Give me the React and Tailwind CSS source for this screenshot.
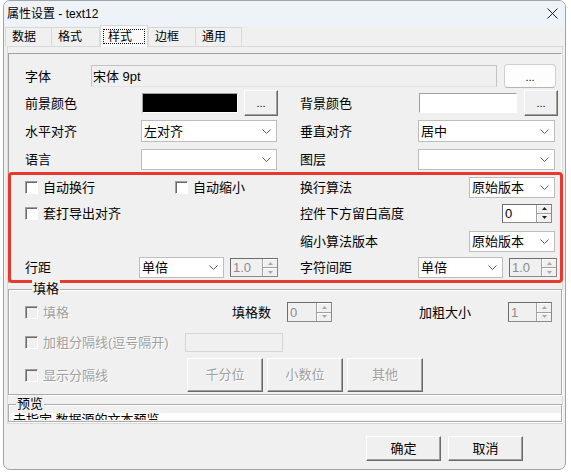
import React from "react";

const FONT = "font-['Liberation_Sans','Noto_Sans_CJK_SC',sans-serif]";
const DIS = "text-[#a0a0a0] [text-shadow:1px_1px_0_#ffffff]";

function Chevron() {
  return (
    <svg width="9" height="5" viewBox="0 0 9 5" className="shrink-0">
      <path d="M0.5 0.5 L4.5 4.5 L8.5 0.5" fill="none" stroke="#5f5f5f" strokeWidth="1" />
    </svg>
  );
}

function Combo({ value, className }) {
  return (
    <div className={`h-[21px] shrink-0 bg-white border border-[#bdbdbd] flex items-center justify-between pl-[2px] pr-[5px] ${className}`}>
      <span className="leading-none">{value}</span>
      <Chevron />
    </div>
  );
}

function Arrow({ up, color }) {
  return (
    <svg width="5" height="3" viewBox="0 0 5 3">
      <path d={up ? "M0 3 L2.5 0 L5 3 Z" : "M0 0 L2.5 3 L5 0 Z"} fill={color} />
    </svg>
  );
}

function Spin({ value, className, disabled }) {
  const arrow = disabled ? "#a8a8a8" : "#202020";
  return (
    <div
      className={`shrink-0 flex border-t border-l border-t-[#6d6d6d] border-l-[#6d6d6d] border-r border-b border-r-[#8a8a8a] border-b-[#8a8a8a] ${
        disabled ? "bg-[#f0f0f0]" : "bg-white"
      } ${className}`}
    >
      <div className={`flex-1 flex items-center pl-[2px] leading-none ${disabled ? "text-[#8c8c8c]" : ""}`}>{value}</div>
      <div className="w-[15px] flex flex-col border-l border-[#a0a0a0]">
        <div className="flex-1 flex items-center justify-center bg-[#f0f0f0] border-b border-[#a0a0a0] shadow-[inset_1px_1px_0_#ffffff]">
          <Arrow up color={arrow} />
        </div>
        <div className="flex-1 flex items-center justify-center bg-[#f0f0f0] shadow-[inset_1px_1px_0_#ffffff]">
          <Arrow color={arrow} />
        </div>
      </div>
    </div>
  );
}

function Btn({ children, className, disabled }) {
  return (
    <div
      className={`shrink-0 flex items-center justify-center bg-[#f0f0f0] border-t border-l border-t-white border-l-white border-r border-b border-r-[#696969] border-b-[#696969] shadow-[inset_-1px_-1px_0_#a0a0a0] ${
        disabled ? DIS : ""
      } ${className}`}
    >
      {children}
    </div>
  );
}

function Check({ label, disabled, className }) {
  return (
    <div className={`shrink-0 flex items-center ${className}`}>
      <span
        className={`w-[13px] h-[13px] shrink-0 border-t border-l border-t-[#a0a0a0] border-l-[#a0a0a0] border-r border-b border-r-white border-b-white shadow-[inset_1px_1px_0_#6a6a6a] ${
          disabled ? "bg-[#f0f0f0]" : "bg-white"
        }`}
      />
      <span className={`ml-[5px] leading-none ${disabled ? DIS : ""}`}>{label}</span>
    </div>
  );
}

function Label({ children, className }) {
  return <span className={`shrink-0 leading-none ${className}`}>{children}</span>;
}

function Swatch({ className }) {
  return (
    <div
      className={`shrink-0 h-[20px] border-t border-l border-t-[#a0a0a0] border-l-[#a0a0a0] border-r border-b border-r-white border-b-white ${className}`}
    />
  );
}

function Tab({ children, active, className }) {
  if (active) {
    return (
      <div className="relative z-10 -mb-[1px] h-[22px] w-[48px] shrink-0 bg-[#f9f9f9] border-t border-l border-r border-[#d9d9d9] flex p-[2px] pt-[3px] pb-[3px]">
        <span className="flex-1 border border-dotted border-[#111111] flex items-center pl-[4px] text-[12px] leading-none">
          {children}
        </span>
      </div>
    );
  }
  return (
    <div
      className={`h-[19px] shrink-0 bg-[#f0f0f0] border-t border-r border-[#d9d9d9] flex items-center pl-[6px] text-[12px] leading-none ${className}`}
    >
      {children}
    </div>
  );
}

function Group({ title, children, className }) {
  return (
    <div
      className={`flex flex-col border border-[#acacac] shadow-[inset_1px_1px_0_#ffffff,1px_1px_0_#ffffff] ${className}`}
    >
      <span className="-mt-[10px] h-[18px] leading-[18px] ml-[7px] px-[1px] w-fit bg-[#f0f0f0]">{title}</span>
      {children}
    </div>
  );
}

export default function App() {
  return (
    <div className={`${FONT} w-[571px] h-[472px] bg-white overflow-hidden text-[13px] text-black`}>
      <div className="ml-[3px] w-[563px] h-[470px] flex flex-col border border-[#a3a3a3] rounded-[7px] bg-[#f0f0f0] overflow-hidden">
        {/* title bar */}
        <div className="h-[25px] shrink-0 flex items-center justify-between bg-[#eef3f9] pl-[3px] pr-[7px]">
          <span className="text-[12px] leading-none">属性设置 - text12</span>
          <svg width="11" height="11" viewBox="0 0 11 11">
            <path d="M0.5 0.5 L10.5 10.5 M10.5 0.5 L0.5 10.5" stroke="#1c1c1c" strokeWidth="1" />
          </svg>
        </div>

        {/* tabs */}
        <div className="h-[20px] shrink-0 flex items-end pl-[1px]">
          <Tab className="w-[47px] border-l">数据</Tab>
          <Tab className="w-[48px]">格式</Tab>
          <Tab active>样式</Tab>
          <Tab className="w-[48px] border-l">边框</Tab>
          <Tab className="w-[46px]">通用</Tab>
        </div>

        {/* tab page */}
        <div className="ml-[3px] w-[556px] shrink-0 border border-[#d9d9d9] flex flex-col pb-[1px]">
          <div className="mt-[6px] border-t border-l border-r border-t-[#a0a0a0] border-l-[#a0a0a0] border-r-white pt-[10px] flex flex-col">
            {/* font */}
            <div className="h-[24px] pl-[16px] flex items-center">
              <Label className="w-[66px]">字体</Label>
              <div className="h-[22px] w-[406px] shrink-0 bg-[#f0f0f0] border border-[#c3c3c3] border-b-[#e4e4e4] flex items-center pl-[1px] leading-none">
                宋体 9pt
              </div>
              <div className="ml-[7px] h-[24px] w-[52px] shrink-0 bg-[#fdfdfd] border border-[#d0d0d0] border-b-[#b5b5b5] rounded-[4px] flex items-end justify-center pb-[4px] text-[11px] leading-none">
                ...
              </div>
            </div>

            {/* colours */}
            <div className="mt-[2px] h-[26px] pl-[16px] flex items-center">
              <Label className="w-[117px]">前景颜色</Label>
              <Swatch className="w-[96px] bg-black" />
              <Btn className="ml-[6px] w-[34px] h-[26px] text-[11px]">...</Btn>
              <Label className="ml-[22px] w-[119px]">背景颜色</Label>
              <Swatch className="w-[98px] bg-white" />
              <Btn className="ml-[7px] w-[34px] h-[26px] text-[11px]">...</Btn>
            </div>

            {/* alignment */}
            <div className="mt-[4px] h-[22px] pl-[16px] flex items-center">
              <Label className="w-[116px]">水平对齐</Label>
              <Combo value="左对齐" className="w-[136px] h-[22px]" />
              <Label className="ml-[23px] w-[118px]">垂直对齐</Label>
              <Combo value="居中" className="w-[137px] h-[22px]" />
            </div>

            {/* language / layer */}
            <div className="mt-[6px] h-[22px] pl-[16px] flex items-center">
              <Label className="w-[116px]">语言</Label>
              <Combo value="" className="w-[136px]" />
              <Label className="ml-[23px] w-[118px]">图层</Label>
              <Combo value="" className="w-[137px]" />
            </div>

            {/* highlighted text options */}
            <div className="mt-[2px] -ml-[1px] -mr-[2px] h-[111px] border-[3px] border-[#e8392e] rounded-[4px] pl-[14px] flex flex-col">
              <div className="h-[24px] flex items-center">
                <Check label="自动换行" className="w-[150px]" />
                <Check label="自动缩小" className="w-[125px]" />
                <Label className="w-[169px]">换行算法</Label>
                <Combo value="原始版本" className="w-[86px]" />
              </div>
              <div className="h-[28px] flex items-center">
                <Check label="套打导出对齐" className="w-[275px]" />
                <Label className="w-[202px]">控件下方留白高度</Label>
                <Spin value="0" className="w-[50px] h-[19px]" />
              </div>
              <div className="h-[28px] flex items-center">
                <div className="w-[275px] shrink-0" />
                <Label className="w-[169px]">缩小算法版本</Label>
                <Combo value="原始版本" className="w-[86px]" />
              </div>
              <div className="h-[25px] flex items-center">
                <Label className="w-[114px]">行距</Label>
                <Combo value="单倍" className="w-[85px]" />
                <Spin value="1.0" disabled className="ml-[6px] w-[48px] h-[19px]" />
                <Label className="ml-[22px] w-[118px]">字符间距</Label>
                <Combo value="单倍" className="w-[85px]" />
                <Spin value="1.0" disabled className="ml-[6px] w-[48px] h-[19px]" />
              </div>
            </div>
          </div>

          {/* fill options */}
          <Group title="填格" className="mt-[6px] pl-[16px] pb-[2px]">
            <div className="mt-[4px] h-[20px] flex items-center">
              <Check label="填格" disabled className="w-[207px]" />
              <Label className="w-[55px]">填格数</Label>
              <Spin value="0" disabled className="w-[45px] h-[20px]" />
              <Label className="ml-[87px] w-[89px]">加粗大小</Label>
              <Spin value="1" disabled className="w-[44px] h-[20px]" />
            </div>
            <div className="mt-[10px] h-[20px] flex items-center">
              <Check label="加粗分隔线(逗号隔开)" disabled className="w-[160px]" />
              <div className="w-[98px] h-[19px] shrink-0 border border-[#d6d6d6] bg-[#f0f0f0]" />
            </div>
            <div className="mt-[6px] h-[34px] flex items-center">
              <Check label="显示分隔线" disabled className="w-[162px]" />
              <Btn disabled className="w-[76px] h-[34px]">千分位</Btn>
              <Btn disabled className="ml-[4px] w-[76px] h-[34px]">小数位</Btn>
              <Btn disabled className="ml-[4px] w-[76px] h-[34px]">其他</Btn>
            </div>
          </Group>

          {/* preview */}
          <Group title="预览" className="mt-[9px] pb-[1px]">
            <div className="ml-[2px] h-[7px] bg-white overflow-hidden">
              <div className="-mt-[2px] pl-[2px] leading-[18px] whitespace-nowrap">未指定 数据源的文本预览</div>
            </div>
          </Group>
        </div>

        {/* dialog buttons */}
        <div className="mt-[12px] flex justify-end pr-[42px]">
          <Btn className="w-[75px] h-[25px]">确定</Btn>
          <Btn className="ml-[7px] w-[75px] h-[25px]">取消</Btn>
        </div>
      </div>
    </div>
  );
}
